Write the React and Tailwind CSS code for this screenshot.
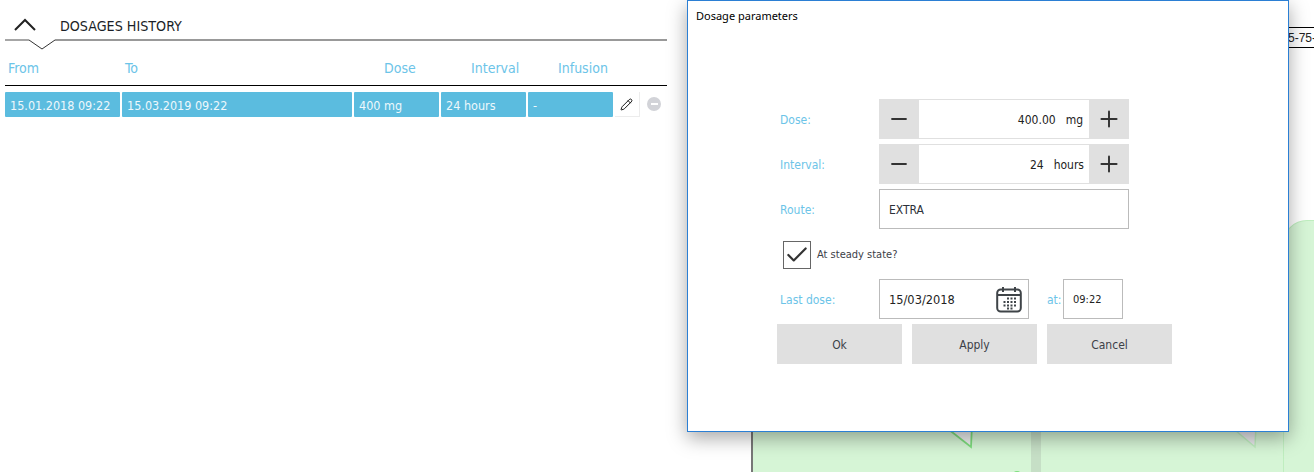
import { Minus, Plus, Check, Pencil } from 'lucide-react';

const columns = [
  { label: 'From', value: '15.01.2018 09:22', width: 'w-[115px]' },
  { label: 'To', value: '15.03.2019 09:22', width: 'w-[230px]' },
  { label: 'Dose', value: '400 mg', width: 'w-[85px]' },
  { label: 'Interval', value: '24 hours', width: 'w-[85px]' },
  { label: 'Infusion', value: '-', width: 'w-[85px]' },
];

const uiFont = "font-['DejaVu_Sans_Condensed','DejaVu_Sans',sans-serif]";

const CalendarIcon = () => (
  <svg width="26" height="27" viewBox="0 0 26 27" fill="none" stroke="#3f4448">
    <rect x="1.2" y="3.5" width="23.6" height="22" rx="3.5" strokeWidth="2" />
    <path d="M1.5 9h23" strokeWidth="2" />
    <path d="M7 1v5M19 1v5" strokeWidth="2" />
    <path
      d="M11 12.5h2M14.5 12.5h2M18 12.5h2M7.5 16h2M11 16h2M14.5 16h2M18 16h2M7.5 19.5h2M11 19.5h2M14.5 19.5h2M18 19.5h2M11 22.5h2M14.5 22.5h2"
      strokeWidth="2"
    />
  </svg>
);

const Stepper = ({ value, unit, unitClass }) => (
  <div className="flex h-10 w-[250px] bg-[#e0e0e0]">
    <button className="flex w-10 items-center justify-center text-[#333]">
      <Minus size={24} strokeWidth={1.8} />
    </button>
    <div className="my-px flex flex-1 items-center justify-end gap-2.5 bg-white pt-0.5 text-xs text-[#222]">
      <span>{value}</span>
      <span className={unitClass}>{unit}</span>
    </div>
    <button className="flex w-10 items-center justify-center text-[#333]">
      <Plus size={26} strokeWidth={1.8} />
    </button>
  </div>
);

const Row = ({ label, children }) => (
  <div className="flex h-10 items-center">
    <span className="ml-[3px] w-[99px] pt-0.5 text-xs text-[#6cc4e8]">{label}</span>
    {children}
  </div>
);

const ActionButton = ({ children }) => (
  <button className="h-10 w-[125px] bg-[#e0e0e0] pt-0.5 text-xs text-[#3c4148]">{children}</button>
);

export default function App() {
  return (
    <div className={`relative h-[472px] w-[1314px] overflow-hidden bg-white ${uiFont}`}>
      {/* background canvas, mostly hidden by the dialog */}
      <div className="absolute top-[221px] left-[751px] h-[300px] w-[281px] border-l-2 border-[#777] bg-[#d6f5d6]" />
      <div className="absolute top-[221px] left-[1031px] h-[300px] w-[10px] bg-[#c6dfc6]" />
      <div className="absolute top-[300px] left-[1041px] h-[200px] w-[273px] bg-[#d6f5d6]" />
      <div className="absolute top-[220px] left-[1283px] h-[300px] w-[60px] rounded-tl-[24px] border-t border-l border-[#bfeebf] bg-[#d6f5d6]" />
      <svg className="absolute top-[425px] left-[940px]" width="40" height="26" viewBox="0 0 40 26">
        <path d="M3 0 L31 22 L32 0 Z" fill="#eef0f0" stroke="#7ede7e" strokeWidth="1.8" />
      </svg>
      <svg className="absolute top-[425px] left-[1225px]" width="40" height="26" viewBox="0 0 40 26">
        <path d="M4 0 L30 22 L31 0 Z" fill="#e8e8ec" stroke="#bfeebf" strokeWidth="1.5" />
      </svg>
      <div className="absolute top-[471px] left-[1013px] h-1 w-2 rounded-t-full bg-[#7ede7e]" />

      <div className="absolute top-[27px] left-[1240px] flex h-[21px] w-[74px] items-center border-y border-black font-['Liberation_Sans',sans-serif] text-xs text-[#222]">
        <span className="ml-[48px] whitespace-nowrap">5-75-</span>
      </div>

      {/* dosages history */}
      <div className="absolute top-0 left-0 w-[667px] pl-[5px]">
        <div className="flex h-[39px] items-end pb-[3px]">
          <svg className="mb-[5px] ml-[9px]" width="22" height="13" viewBox="0 0 22 13" fill="none">
            <path d="M1 12 L11 2 L21 12" stroke="#222" strokeWidth="2" />
          </svg>
          <span className="ml-6 text-[14.2px] leading-[20px] text-[#1b1f28]">DOSAGES HISTORY</span>
        </div>
        <svg className="block" width="662" height="13" viewBox="0 0 662 13" fill="none">
          <path d="M0 1 H24" stroke="#888" strokeWidth="1.5" />
          <path d="M50 1 H662" stroke="#777" strokeWidth="1.5" />
          <path d="M24 1 L37 10 L50 1" stroke="#333" strokeWidth="1" />
        </svg>
        <div className="flex h-[34px] items-center gap-0.5 border-b border-black pb-[1px]">
          <span className="w-[115px] pl-[3px] text-sm text-[#6cc4e8]">From</span>
          <span className="w-[230px] pl-[3px] text-sm text-[#6cc4e8]">To</span>
          <span className="w-[85px] pl-[30px] text-sm text-[#6cc4e8]">Dose</span>
          <span className="w-[85px] pl-[30px] text-sm text-[#6cc4e8]">Interval</span>
          <span className="w-[85px] pl-[30px] text-sm text-[#6cc4e8]">Infusion</span>
        </div>
        <div className="mt-1.5 flex h-[25px] items-stretch gap-0.5">
          {columns.map((col) => (
            <div
              key={col.label}
              className={`${col.width} flex items-center rounded-[1px] bg-[#5bbcdf] pt-[3px] pl-[5px] text-[12.5px] whitespace-nowrap text-[#eef8fc]`}
            >
              {col.value}
            </div>
          ))}
          <button className="flex w-[25px] items-center justify-center border-r border-b border-[#ececec] pr-[2px] text-[#111]">
            <Pencil size={13} strokeWidth={1.8} />
          </button>
          <div className="mt-[5px] ml-[5px] flex h-[14px] w-[14px] items-center justify-center rounded-full bg-[#d2d3d8]">
            <div className="h-[2px] w-[7px] bg-white" />
          </div>
        </div>
      </div>

      {/* dialog */}
      <div className="absolute top-0 left-[687px] h-[432px] w-[602px] border border-[#2b7fd4] bg-white pt-[7px] shadow-[0_6px_18px_rgba(0,0,0,0.35)]">
        <h1 className="pl-2 font-['Noto_Sans',sans-serif] text-[11px] leading-[15px] text-black">
          Dosage parameters
        </h1>
        <div className="mt-[76px] flex flex-col gap-[5px] pl-[89px]">
          <Row label="Dose:">
            <Stepper value="400.00" unit="mg" unitClass="mr-[6px]" />
          </Row>
          <Row label="Interval:">
            <Stepper value="24" unit="hours" unitClass="mr-[5px]" />
          </Row>
          <Row label="Route:">
            <div className="flex h-10 w-[250px] items-center border border-[#bbb] pt-0.5 pl-[9px] text-xs text-[#2c3038]">
              EXTRA
            </div>
          </Row>
          <div className="mt-[6px] mb-[5px] flex h-[29px] items-center pl-[6px]">
            <div className="flex h-7 w-7 items-center justify-center border border-[#666]">
              <Check size={26} strokeWidth={2} className="text-[#333]" />
            </div>
            <span className="ml-1.5 pt-0.5 text-[11px] text-[#3c4148]">At steady state?</span>
          </div>
          <Row label="Last dose:">
            <div className="flex h-10 w-[150px] items-center justify-between border border-[#bbb] pr-[6px] pl-[9px] text-[12.7px] text-[#222]">
              <span className="pt-0.5">15/03/2018</span>
              <CalendarIcon />
            </div>
            <span className="ml-[18px] w-[16px] pt-0.5 text-xs text-[#6cc4e8]">at:</span>
            <div className="flex h-10 w-[60px] items-center border border-[#bbb] pt-0.5 pl-[9px] text-[11px] text-[#222]">
              09:22
            </div>
          </Row>
          <div className="flex gap-2.5">
            <ActionButton>Ok</ActionButton>
            <ActionButton>Apply</ActionButton>
            <ActionButton>Cancel</ActionButton>
          </div>
        </div>
      </div>
    </div>
  );
}
